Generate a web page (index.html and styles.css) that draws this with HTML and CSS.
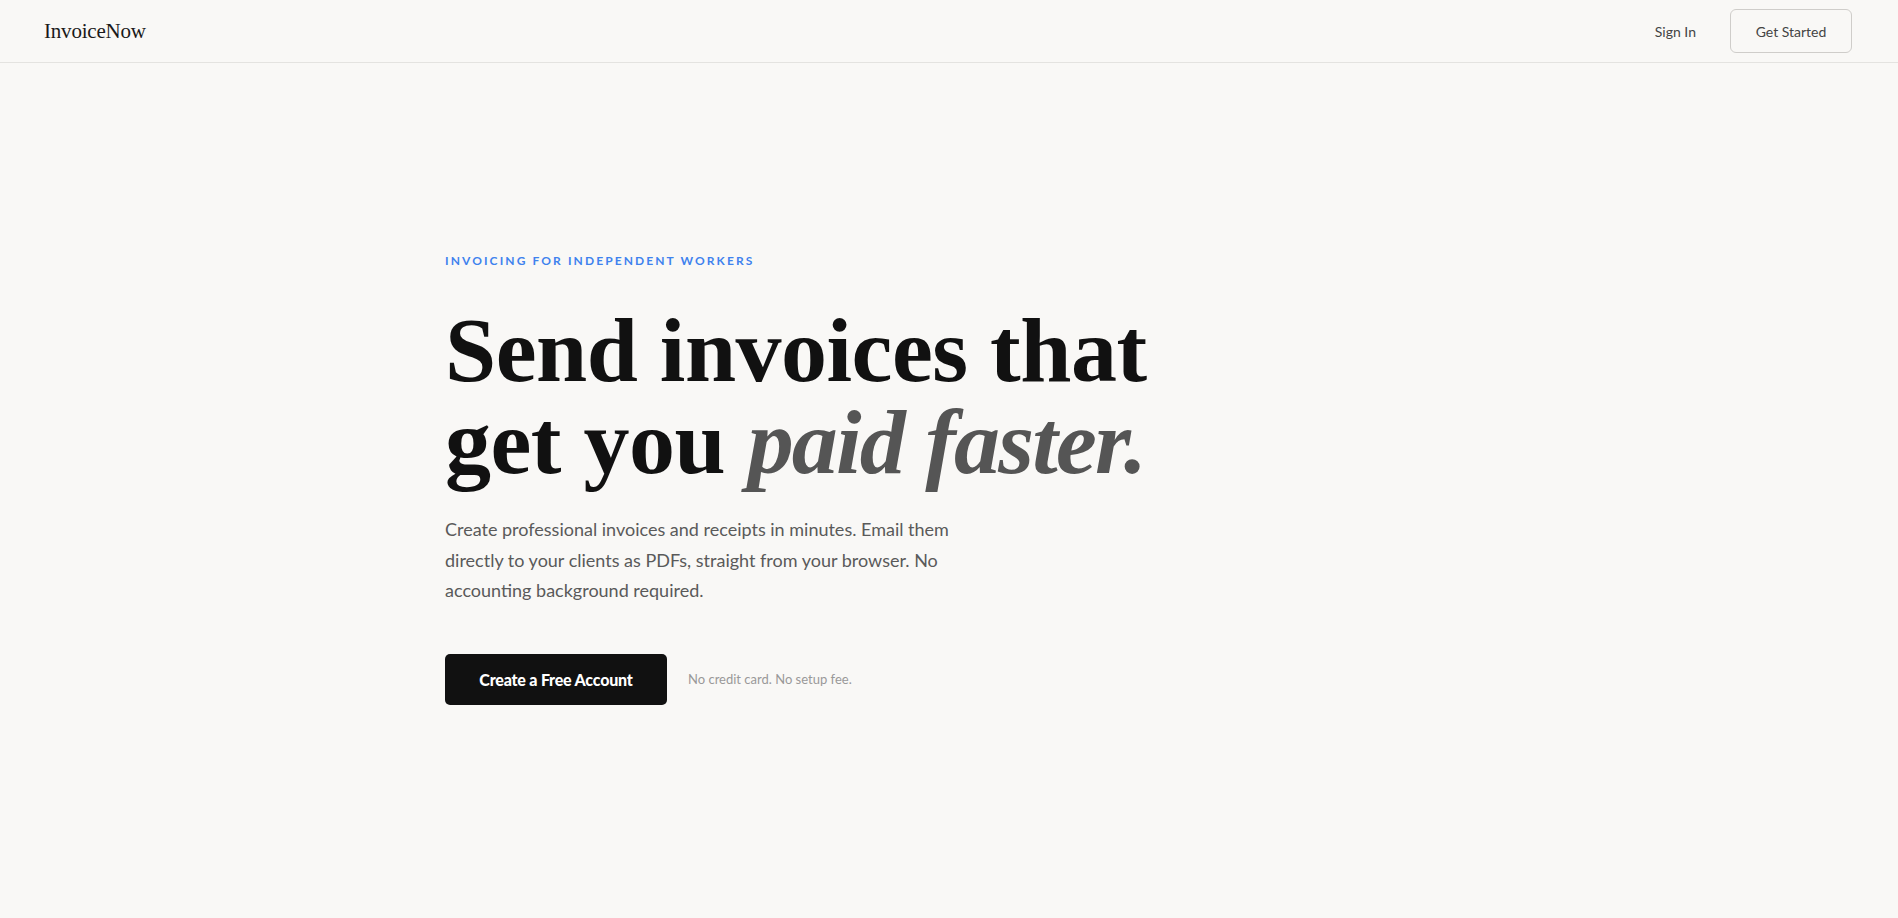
FILE: index.html
```html
<!DOCTYPE html>
<html lang="en">
<head>
    <meta charset="UTF-8">
    <meta name="viewport" content="width=device-width, initial-scale=1.0">
    <title>InvoiceNow</title>
    <link rel="stylesheet" href="styles.css">
</head>
<body>
    <header class="site-header">
        <a href="#" class="logo">InvoiceNow</a>
        <nav class="header-nav">
            <a href="#" class="nav-link">Sign In</a>
            <a href="#" class="btn-outline">Get Started</a>
        </nav>
    </header>

    <main class="hero">
        <div class="hero-inner">
            <p class="eyebrow">Invoicing for independent workers</p>
            <h1 class="hero-title">Send invoices that<br>get you <em>paid faster.</em></h1>
            <p class="hero-text">
                Create professional invoices and receipts in minutes. Email them
                directly to your clients as PDFs, straight from your browser. No
                accounting background required.
            </p>
            <div class="hero-actions">
                <a href="#" class="btn-primary">Create a Free Account</a>
                <span class="hero-note">No credit card. No setup fee.</span>
            </div>
        </div>
    </main>
</body>
</html>
```

FILE: styles.css
```css
* {
    margin: 0;
    padding: 0;
    box-sizing: border-box;
}

body {
    background: #f9f8f6;
    color: #111;
    font-family: 'Lato', 'Noto Sans', sans-serif;
    min-height: 100vh;
}

a {
    text-decoration: none;
    color: inherit;
}

.site-header {
    height: 63px;
    display: flex;
    justify-content: space-between;
    align-items: center;
    padding: 0 46px 0 44px;
    border-bottom: 1px solid #e4e3e0;
}

.logo {
    font-family: 'Liberation Serif', serif;
    font-size: 21px;
    color: #1a1a1a;
    letter-spacing: -0.2px;
}

.header-nav {
    display: flex;
    align-items: center;
    gap: 34px;
}

.nav-link {
    font-size: 14px;
    color: #444;
}

.btn-outline {
    display: flex;
    align-items: center;
    justify-content: center;
    width: 122px;
    height: 44px;
    border: 1px solid #cfcdca;
    border-radius: 6px;
    font-size: 14px;
    color: #444;
}

.hero-inner {
    width: 1008px;
    margin: 0 auto;
    padding-top: 190px;
}

.eyebrow {
    font-size: 12px;
    font-weight: 700;
    letter-spacing: 2.1px;
    text-transform: uppercase;
    color: #3f82ee;
}

.hero-title {
    margin-top: 36px;
    font-family: 'Liberation Serif', serif;
    font-weight: 700;
    font-size: 92px;
    line-height: 92px;
    letter-spacing: -0.5px;
    color: #111;
}

.hero-title em {
    font-style: italic;
    color: #555;
    letter-spacing: -1.8px;
}

.hero-text {
    margin-top: 26px;
    max-width: 520px;
    font-size: 18px;
    font-weight: 400;
    line-height: 30.6px;
    color: #5a5a5a;
}

.hero-actions {
    margin-top: 48px;
    display: flex;
    align-items: center;
    gap: 21px;
}

.btn-primary {
    display: flex;
    align-items: center;
    justify-content: center;
    width: 222px;
    height: 51px;
    background: #111;
    color: #fff;
    border-radius: 5px;
    font-size: 16px;
    font-weight: 900;
    letter-spacing: -0.2px;
}

.hero-note {
    font-size: 13px;
    color: #999;
}
```
